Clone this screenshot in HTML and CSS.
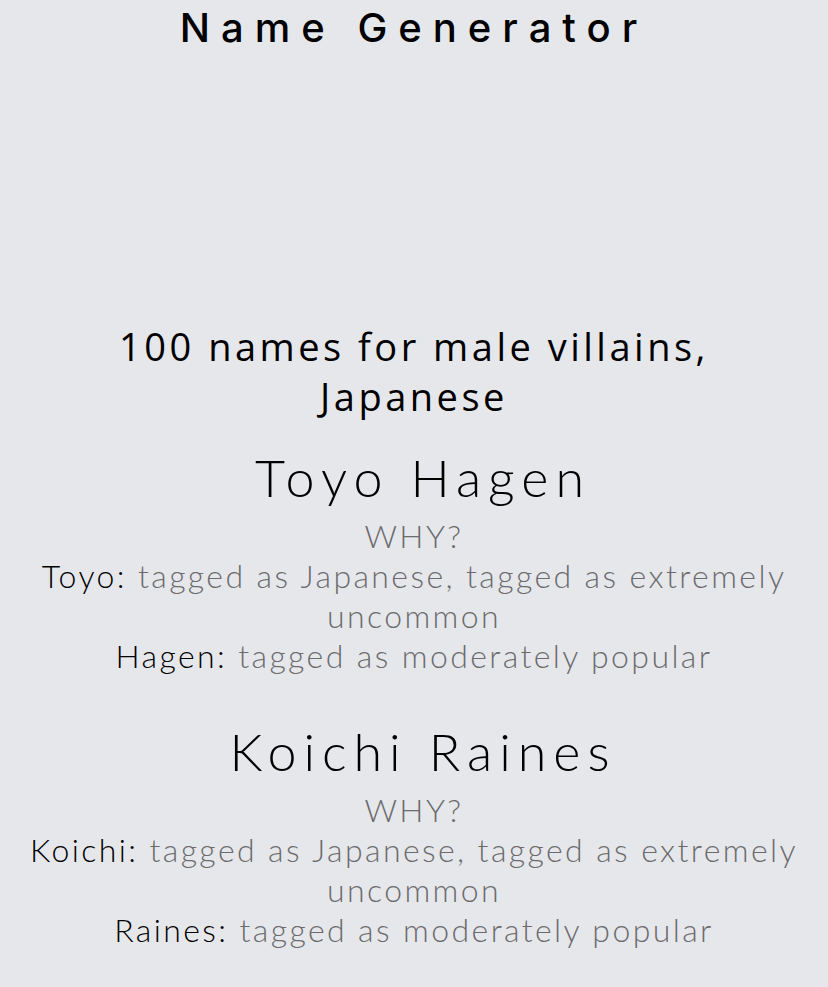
FILE: index.html
```html
<!DOCTYPE html>
<html lang="en">
<head>
    <meta charset="UTF-8">
    <meta name="viewport" content="width=device-width, initial-scale=1.0">
    <title>Name Generator</title>
    <link rel="stylesheet" href="styles.css">
</head>
<body>
    <div class="page">
        <header class="site-header">
            <h1 class="site-title">Name Generator</h1>
        </header>

        <div class="ad-slot"></div>

        <h2 class="list-title">100 names for male villains, Japanese</h2>

        <div class="name-list">
            <div class="name-card">
                <div class="full-name">Toyo Hagen</div>
                <div class="why">WHY?</div>
                <div class="reason"><span class="part">Toyo:</span> tagged as Japanese, tagged as extremely uncommon</div>
                <div class="reason"><span class="part">Hagen:</span> tagged as moderately popular</div>
            </div>

            <div class="name-card">
                <div class="full-name">Koichi Raines</div>
                <div class="why">WHY?</div>
                <div class="reason"><span class="part">Koichi:</span> tagged as Japanese, tagged as extremely uncommon</div>
                <div class="reason"><span class="part">Raines:</span> tagged as moderately popular</div>
            </div>
        </div>
    </div>
</body>
</html>
```

FILE: styles.css
```css
body {
    margin: 0;
    padding: 0;
    background-color: #e6e7eb;
    color: #000;
    font-family: "Lato", sans-serif;
}
.page {
    display: flex;
    flex-direction: column;
    align-items: center;
    text-align: center;
}
.site-header {
    padding-top: 2px;
}
.site-title {
    margin: 0;
    font-family: "Inter", sans-serif;
    font-weight: 500;
    font-size: 40px;
    line-height: 52px;
    letter-spacing: 11px;
}
.ad-slot {
    height: 267px;
}
.list-title {
    margin: 0;
    width: 700px;
    font-family: "Open Sans", sans-serif;
    font-weight: 400;
    font-size: 38px;
    line-height: 50px;
    letter-spacing: 3.5px;
}
.name-list {
    display: flex;
    flex-direction: column;
    gap: 45px;
    margin-top: 26px;
}
.name-card {
    display: flex;
    flex-direction: column;
    align-items: center;
}
.full-name {
    margin-bottom: 9px;
    margin-left: 18px;
    font-family: "Lato", sans-serif;
    font-weight: 300;
    font-size: 52px;
    line-height: 60px;
    letter-spacing: 7px;
}
.why,
.reason {
    font-family: "Lato", sans-serif;
    font-weight: 300;
    font-size: 32px;
    line-height: 40px;
    letter-spacing: 2.4px;
    color: #6b6b6d;
}
.reason {
    width: 800px;
}
.part {
    color: #000;
}
```
